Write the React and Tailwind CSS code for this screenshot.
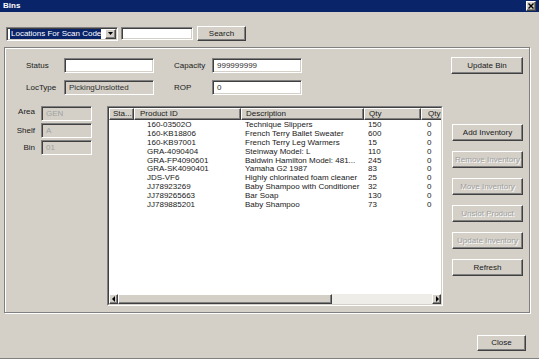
const rows = [
  { id: "160-03502O", desc: "Technique Slippers", qty: "150", avail: "0" },
  { id: "160-KB18806", desc: "French Terry Ballet Sweater", qty: "600", avail: "0" },
  { id: "160-KB97001", desc: "French Terry Leg Warmers", qty: "15", avail: "0" },
  { id: "GRA-4090404", desc: "Steinway Model: L", qty: "110", avail: "0" },
  { id: "GRA-FP4090601", desc: "Baldwin Hamilton Model: 481...", qty: "245", avail: "0" },
  { id: "GRA-SK4090401", desc: "Yamaha G2 1987", qty: "83", avail: "0" },
  { id: "JDS-VF6", desc: "Highly chlorinated foam cleaner", qty: "25", avail: "0" },
  { id: "JJ78923269", desc: "Baby Shampoo with Conditioner", qty: "32", avail: "0" },
  { id: "JJ789265663", desc: "Bar Soap", qty: "130", avail: "0" },
  { id: "JJ789885201", desc: "Baby Shampoo", qty: "73", avail: "0" },
]

// classic win 3d borders
const raised = "border border-t-white border-l-white border-b-[#404040] border-r-[#404040] shadow-[inset_-1px_-1px_0_#808080] bg-[#d4d0c8]"
const sunken = "border border-t-[#808080] border-l-[#808080] border-b-white border-r-white shadow-[inset_1px_1px_0_#404040,inset_-1px_-1px_0_#d4d0c8]"

const Field = ({ w, value, disabled, dim }) => (
  <div className={`${sunken} ${w} h-[15px] flex items-center pl-[4px] ${disabled ? "bg-[#d4d0c8]" : "bg-white"} ${dim ? "text-[#a0a0a0]" : "text-[#303030]"}`}>
    {value}
  </div>
)

const Btn = ({ label, disabled, cls }) => (
  <button className={`${raised} ${cls} flex items-center justify-center whitespace-nowrap ${disabled ? "text-[#a0a0a0] [text-shadow:1px_1px_0_#fff]" : "text-[#202020]"}`}>
    {label}
  </button>
)

const Arrow = ({ dir }) => (
  <svg width="4" height="6" viewBox="0 0 4 6">
    {dir === "left" ? <path d="M3 0 L0 3 L3 6 Z" fill="#000" /> : <path d="M1 0 L4 3 L1 6 Z" fill="#000" />}
  </svg>
)

export default function App() {
  return (
    <div className="w-[539px] h-[359px] bg-[#d4d0c8] flex flex-col font-['Liberation_Sans',Arial,sans-serif] text-[8px] leading-none text-[#202020] border-b border-[#808080] overflow-hidden">
      {/* title bar */}
      <div className="h-[12px] bg-[#0a246a] flex items-center justify-between pl-[3px] pr-[3px]">
        <span className="text-white font-bold">Bins</span>
        <div className={`${raised} w-[10px] h-[10px] flex items-center justify-center`}>
          <svg width="6" height="6" viewBox="0 0 6 6">
            <path d="M0.5 0.5 L5.5 5.5 M5.5 0.5 L0.5 5.5" stroke="#000" strokeWidth="1.4" />
          </svg>
        </div>
      </div>

      {/* search row */}
      <div className="flex items-center mt-[14px] ml-[6px]">
        <div className={`${sunken} bg-white w-[112px] h-[14px] flex items-center pl-[3px] pr-[1px]`}>
          <span className="bg-[#0a246a] text-white h-[10px] w-[91px] flex items-center pl-[1px] whitespace-nowrap overflow-hidden">Locations For Scan Code</span>
          <div className={`${raised} ml-auto w-[11px] h-[10px] flex items-center justify-center`}>
            <svg width="5" height="3" viewBox="0 0 5 3">
              <path d="M0 0 L5 0 L2.5 3 Z" fill="#000" />
            </svg>
          </div>
        </div>
        <div className={`${sunken} bg-white w-[72px] h-[13px] ml-[3px]`}></div>
        <Btn label="Search" cls="ml-[4px] w-[49px] h-[15px]" />
      </div>

      {/* group box */}
      <div className="mt-[6px] ml-[4px] w-[526px] h-[266px] border border-[#808080] shadow-[inset_1px_1px_0_#fff,1px_1px_0_#fff] flex flex-col">
        <div className="flex pt-[9px]">
          <div className="flex flex-col gap-[7px] pt-[1px] pl-[21px]">
            <div className="flex items-center">
              <span className="w-[38px]">Status</span>
              <Field w="w-[90px]" value="" />
              <span className="w-[38px] ml-[20px]">Capacity</span>
              <Field w="w-[90px]" value="999999999" />
            </div>
            <div className="flex items-center">
              <span className="w-[38px]">LocType</span>
              <Field w="w-[90px]" value="PickingUnslotted" disabled />
              <span className="w-[38px] ml-[20px]">ROP</span>
              <Field w="w-[90px]" value="0" />
            </div>
          </div>
          <Btn label="Update Bin" cls="ml-auto mr-[6px] w-[72px] h-[17px]" />
        </div>

        <div className="flex mt-[11px]">
          <div className="w-[102px] flex flex-col gap-[2px]">
            <div className="flex items-center">
              <span className="w-[30px] text-right mr-[6px] -mt-[3px]">Area</span>
              <Field w="w-[51px]" value="GEN" disabled dim />
            </div>
            <div className="flex items-center">
              <span className="w-[30px] text-right mr-[6px]">Shelf</span>
              <Field w="w-[51px]" value="A" disabled dim />
            </div>
            <div className="flex items-center">
              <span className="w-[30px] text-right mr-[6px]">Bin</span>
              <Field w="w-[51px]" value="01" disabled dim />
            </div>
          </div>

          {/* table */}
          <div className="w-[336px] h-[200px] shrink-0 border border-t-[#808080] border-l-[#808080] border-b-white border-r-white">
            <div className="h-full border border-t-[#404040] border-l-[#404040] border-b-[#d4d0c8] border-r-[#d4d0c8] bg-white flex flex-col overflow-hidden">
              <div className="flex h-[12px] shrink-0 overflow-hidden">
                <div className={`${raised} w-[25px] shrink-0 pl-[3px] flex items-center`}>Sta...</div>
                <div className={`${raised} w-[107px] shrink-0 pl-[5px] flex items-center`}>Product ID</div>
                <div className={`${raised} w-[123px] shrink-0 pl-[4px] flex items-center`}>Description</div>
                <div className={`${raised} w-[57px] shrink-0 pl-[4px] flex items-center`}>Qty</div>
                <div className={`${raised} w-[60px] shrink-0 pl-[6px] flex items-center whitespace-nowrap`}>Qty Available</div>
              </div>
              <div className="flex-1 pt-[1px]">
                {rows.map((r, i) => (
                  <div key={i} className="flex h-[8.8px] items-center whitespace-nowrap">
                    <div className="w-[25px] shrink-0"></div>
                    <div className="w-[107px] shrink-0 pl-[13px]">{r.id}</div>
                    <div className="w-[123px] shrink-0 pl-[4px]">{r.desc}</div>
                    <div className="w-[57px] shrink-0 pl-[4px]">{r.qty}</div>
                    <div className="pl-[6px]">{r.avail}</div>
                  </div>
                ))}
              </div>
              <div className="flex h-[10px] shrink-0 bg-[#eeede8]">
                <div className={`${raised} w-[9px] flex items-center justify-center`}><Arrow dir="left" /></div>
                <div className={`${raised} w-[214px]`}></div>
                <div className="flex-1"></div>
                <div className={`${raised} w-[9px] flex items-center justify-center`}><Arrow dir="right" /></div>
              </div>
            </div>
          </div>

          <div className="flex flex-col gap-[10px] pl-[9px] pt-[18px]">
            <Btn label="Add Inventory" cls="w-[71px] h-[17px]" />
            <Btn label="Remove Inventory" cls="w-[71px] h-[17px]" disabled />
            <Btn label="Move Inventory" cls="w-[71px] h-[17px]" disabled />
            <Btn label="Unslot Product" cls="w-[71px] h-[17px]" disabled />
            <Btn label="Update Inventory" cls="w-[71px] h-[17px]" disabled />
            <Btn label="Refresh" cls="w-[71px] h-[17px]" />
          </div>
        </div>
      </div>

      <div className="mt-auto mb-[7px] flex justify-end pr-[13px]">
        <Btn label="Close" cls="w-[49px] h-[16px]" />
      </div>
    </div>
  )
}
